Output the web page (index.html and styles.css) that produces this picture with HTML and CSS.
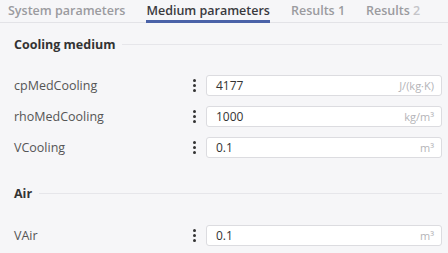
FILE: index.html
```html
<!DOCTYPE html>
<html lang="en">
<head>
    <meta charset="UTF-8">
    <title>Medium parameters</title>
    <link rel="stylesheet" href="styles.css">
</head>
<body>
    <nav class="tab-bar">
        <span class="tab">System parameters</span>
        <span class="tab tab-active">Medium parameters</span>
        <span class="tab">Results 1</span>
        <span class="tab tab-last">Results <span class="tab-num">2</span></span>
    </nav>

    <section class="param-section">
        <div class="section-head">
            <span class="section-title">Cooling medium</span>
            <span class="section-line"></span>
        </div>
        <div class="param-list">
            <div class="param-row">
                <span class="param-label">cpMedCooling</span>
                <span class="dots"><i></i><i></i><i></i></span>
                <div class="param-input">
                    <span class="param-value">4177</span>
                    <span class="param-unit">J/(kg·K)</span>
                </div>
            </div>
            <div class="param-row">
                <span class="param-label">rhoMedCooling</span>
                <span class="dots"><i></i><i></i><i></i></span>
                <div class="param-input">
                    <span class="param-value">1000</span>
                    <span class="param-unit">kg/m³</span>
                </div>
            </div>
            <div class="param-row">
                <span class="param-label">VCooling</span>
                <span class="dots"><i></i><i></i><i></i></span>
                <div class="param-input">
                    <span class="param-value">0.1</span>
                    <span class="param-unit">m³</span>
                </div>
            </div>
        </div>
    </section>

    <section class="param-section section-air">
        <div class="section-head">
            <span class="section-title">Air</span>
            <span class="section-line"></span>
        </div>
        <div class="param-list">
            <div class="param-row">
                <span class="param-label">VAir</span>
                <span class="dots"><i></i><i></i><i></i></span>
                <div class="param-input">
                    <span class="param-value">0.1</span>
                    <span class="param-unit">m³</span>
                </div>
            </div>
        </div>
    </section>
</body>
</html>
```

FILE: styles.css
```css
* {
    margin: 0;
    padding: 0;
    box-sizing: border-box;
}

body {
    font-family: "Open Sans", "Noto Sans", sans-serif;
    background-color: #f6f6f8;
    color: #444;
    width: 448px;
    height: 253px;
    overflow: hidden;
}

.tab-bar {
    display: flex;
    height: 23px;
    padding-left: 8px;
    border-bottom: 1px solid #e3e3e7;
    gap: 21px;
}

.tab {
    font-size: 12.5px;
    font-weight: 600;
    color: #9b9b9f;
    line-height: 22px;
    white-space: nowrap;
}

.tab-active {
    color: #3a3a3e;
    border-bottom: 3px solid #4a62a8;
    height: 23px;
}

.tab-num {
    color: #c4c4c8;
}

.param-section {
    padding: 11px 6px 0 14px;
}

.section-air {
    padding-top: 25px;
}

.section-head {
    display: flex;
    align-items: center;
    gap: 7px;
    height: 20px;
}

.section-title {
    font-size: 12.5px;
    font-weight: 700;
    color: #333;
}

.section-line {
    flex: 1;
    height: 1px;
    background-color: #e6e6ea;
}

.param-list {
    padding-top: 21px;
    display: flex;
    flex-direction: column;
    gap: 10px;
}

.section-air .param-list {
    padding-top: 22px;
}

.param-row {
    display: flex;
    align-items: center;
    height: 21px;
}

.param-label {
    flex: 1;
    font-size: 12.5px;
    color: #555;
}

.dots {
    display: flex;
    flex-direction: column;
    gap: 2px;
    width: 4px;
    margin-right: 9px;
}

.dots i {
    width: 3px;
    height: 3px;
    border-radius: 50%;
    background-color: #333;
}

.param-input {
    width: 236px;
    height: 21px;
    display: flex;
    align-items: center;
    justify-content: space-between;
    background-color: #fff;
    border: 1px solid #dcdce0;
    border-radius: 3px;
    padding: 0 7px 0 9px;
}

.param-value {
    font-size: 12px;
    color: #333;
}

.param-unit {
    font-size: 11px;
    color: #b4b4b8;
}
```
